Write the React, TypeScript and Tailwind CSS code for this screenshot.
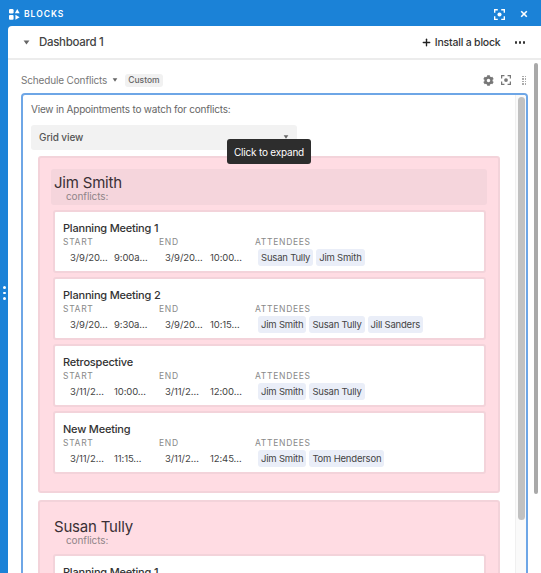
import { Plus } from 'lucide-react';
import { FaCog } from 'react-icons/fa';

const font = { fontFamily: 'Inter, "Liberation Sans", sans-serif' };

type Meeting = {
  title: string;
  startDate: string;
  startTime: string;
  endDate: string;
  endTime: string;
  attendees: string[];
};

const jimMeetings: Meeting[] = [
  { title: 'Planning Meeting 1', startDate: '3/9/20…', startTime: '9:00a…', endDate: '3/9/20…', endTime: '10:00…', attendees: ['Susan Tully', 'Jim Smith'] },
  { title: 'Planning Meeting 2', startDate: '3/9/20…', startTime: '9:30a…', endDate: '3/9/20…', endTime: '10:15…', attendees: ['Jim Smith', 'Susan Tully', 'Jill Sanders'] },
  { title: 'Retrospective', startDate: '3/11/2…', startTime: '10:00…', endDate: '3/11/2…', endTime: '12:00…', attendees: ['Jim Smith', 'Susan Tully'] },
  { title: 'New Meeting', startDate: '3/11/2…', startTime: '11:15…', endDate: '3/11/2…', endTime: '12:45…', attendees: ['Jim Smith', 'Tom Henderson'] },
];

const susanMeetings: Meeting[] = [jimMeetings[0]];

const Caret = ({ className }: { className: string }) => (
  <svg viewBox="0 0 8 6" className={className} fill="currentColor">
    <path d="M0.5 0.5h7L4 5.5z" />
  </svg>
);

const FocusIcon = ({ className }: { className: string }) => (
  <svg viewBox="0 0 16 16" className={className} fill="none" stroke="currentColor" strokeWidth="2">
    <path d="M1 5.5V1h4.5M10.5 1H15v4.5M15 10.5V15h-4.5M5.5 15H1v-4.5" />
    <circle cx="8" cy="8" r="3" fill="currentColor" stroke="none" />
  </svg>
);

const BlocksLogo = () => (
  <svg viewBox="0 0 12 12" className="w-[11px] h-[11px] text-white" fill="currentColor">
    <rect x="0" y="0" width="5" height="5" rx="1.4" />
    <path d="M9 0l2.6 4.6H6.4z" />
    <rect x="0" y="6.6" width="5" height="5" rx="1" />
    <path d="M7 6.4l4.6 2.6L7 11.6z" />
  </svg>
);

const MeetingCard = ({ meeting }: { meeting: Meeting }) => (
  <div className="h-[63px] shrink-0 bg-white rounded-[3px] border-2 border-[#f3d3da] pl-[8px] pt-[8px]">
    <div className="text-[11px] leading-[16px] font-medium tracking-[-0.2px] text-[#333]">{meeting.title}</div>
    <div className="flex">
      <div className="w-[96px] shrink-0">
        <div className="text-[8.5px] leading-[12px] tracking-[0.7px] text-[#898989]">START</div>
        <div className="flex pl-[7px] pt-[1px] text-[9.5px] leading-[18px] tracking-[-0.1px] text-[#444]">
          <span className="w-[44px]">{meeting.startDate}</span>
          <span>{meeting.startTime}</span>
        </div>
      </div>
      <div className="w-[96px] shrink-0">
        <div className="text-[8.5px] leading-[12px] tracking-[0.7px] text-[#898989]">END</div>
        <div className="flex pl-[6px] pt-[1px] text-[9.5px] leading-[18px] tracking-[-0.1px] text-[#444]">
          <span className="w-[45px]">{meeting.endDate}</span>
          <span>{meeting.endTime}</span>
        </div>
      </div>
      <div className="min-w-0">
        <div className="text-[8.5px] leading-[12px] tracking-[0.7px] text-[#898989]">ATTENDEES</div>
        <div className="flex gap-[3px] pl-[3px] pt-[1px]">
          {meeting.attendees.map((name) => (
            <span key={name} className="h-[17px] px-[3px] rounded-[3px] bg-[#eaeef8] text-[9.5px] leading-[17px] tracking-[-0.2px] text-[#444] whitespace-nowrap">
              {name}
            </span>
          ))}
        </div>
      </div>
    </div>
  </div>
);

const PersonGroup = ({ name, meetings, tinted }: { name: string; meetings: Meeting[]; tinted?: boolean }) => (
  <div className="shrink-0 w-[462px] bg-[#ffdce3] rounded-[3px] border-2 border-[#f3d3da] pt-[11px] pb-[17px] pl-[11px] pr-[11px]">
    <div className={`h-[36px] rounded-[3px] pl-[3px] pt-[5px] ${tinted ? 'bg-[#f5d5dc]' : ''}`}>
      <div className="text-[15px] leading-[17px] tracking-[-0.2px] text-[#3a3035]">{name}</div>
      <div className="pl-[12px] text-[10px] leading-[10px] tracking-[-0.1px] text-[#8f8488]">conflicts:</div>
    </div>
    <div className="flex flex-col gap-[4px] mt-[5px] ml-[2px] mr-[1px]">
      {meetings.map((m) => (
        <MeetingCard key={m.title} meeting={m} />
      ))}
    </div>
  </div>
);

export default function App() {
  return (
    <div className="relative w-[541px] h-[573px] overflow-hidden bg-[#1b82d7] flex flex-col" style={font}>
      <div className="h-[26px] shrink-0 flex items-center pl-[9px] pr-[13px] pt-[2px] text-white">
        <BlocksLogo />
        <span className="ml-[4px] text-[8.5px] font-semibold tracking-[1px]">BLOCKS</span>
        <FocusIcon className="w-[11px] h-[11px] ml-auto" />
        <svg viewBox="0 0 10 10" className="w-[8px] h-[8px] ml-[15px]" stroke="currentColor" strokeWidth="2">
          <path d="M1.5 1.5l7 7M8.5 1.5l-7 7" />
        </svg>
      </div>

      <div className="relative flex-1 min-h-0 ml-[8px] bg-white rounded-tl-[4px] flex flex-col">
        <div className="h-[34px] shrink-0 flex items-center border-b-2 border-[#ececec] pl-[15px] pr-[16px] pt-[1px]">
          <Caret className="w-[7px] h-[5px] text-[#666]" />
          <span className="ml-[9px] text-[11.5px] font-medium tracking-[-0.3px] text-[#444]">Dashboard 1</span>
          <Plus className="ml-auto w-[11px] h-[11px] text-[#222]" strokeWidth={3} />
          <span className="ml-[3px] text-[10.5px] font-medium tracking-[-0.2px] text-[#333]">Install a block</span>
          <div className="ml-[14px] flex gap-[1.5px]">
            <span className="w-[2.5px] h-[2.5px] rounded-full bg-[#333]" />
            <span className="w-[2.5px] h-[2.5px] rounded-full bg-[#333]" />
            <span className="w-[2.5px] h-[2.5px] rounded-full bg-[#333]" />
          </div>
        </div>

        <div className="h-[33px] shrink-0 flex items-center pl-[13px] pr-[15px] pt-[7px]">
          <span className="text-[10px] tracking-[-0.15px] text-[#777]">Schedule Conflicts</span>
          <Caret className="ml-[5px] w-[6px] h-[4px] text-[#666]" />
          <span className="ml-[7px] h-[13px] px-[3px] rounded-[3px] bg-[#f1f1f1] text-[8.5px] leading-[13px] font-medium text-[#666]">Custom</span>
          <FaCog className="ml-auto w-[11px] h-[11px] text-[#777]" />
          <FocusIcon className="ml-[7px] w-[10px] h-[10px] text-[#777]" />
          <div className="ml-[11px] grid grid-cols-2 gap-[1px]">
            {[0, 1, 2, 3, 4, 5, 6, 7].map((i) => (
              <span key={i} className="w-[1.5px] h-[1.5px] bg-[#aaa]" />
            ))}
          </div>
        </div>

        <div className="relative flex-1 min-h-0 ml-[13px] mr-[13px] rounded-t-[4px] border-x-2 border-t-2 border-[#6ea6e6] overflow-hidden pl-[8px] pt-[7px]">
          <div className="text-[10px] leading-[14px] tracking-[-0.2px] text-[#666]">View in Appointments to watch for conflicts:</div>
          <div className="mt-[9px] w-[266px] h-[25px] rounded-[3px] bg-[#f2f2f2] flex items-center pl-[8px] pr-[8px] pb-[1px] text-[10px] font-medium tracking-[-0.1px] text-[#555]">
            Grid view
            <Caret className="ml-auto w-[6px] h-[4px] text-[#666]" />
          </div>
          <div className="flex flex-col gap-[7px] mt-[6px] ml-[7px]">
            <PersonGroup name="Jim Smith" meetings={jimMeetings} tinted />
            <PersonGroup name="Susan Tully" meetings={susanMeetings} />
          </div>
          <div className="absolute top-0 right-0 bottom-0 w-[11px] bg-[#fafafa] border-l border-[#f0f0f0]" />
          <div className="absolute top-[2px] right-[1px] w-[7px] h-[423px] rounded-full bg-[#c1c1c1]" />
        </div>

        <div className="absolute top-[37px] right-[3px] w-[4px] h-[431px] rounded-full bg-[#a9a9a9]" />
      </div>

      <div className="absolute left-[3px] top-[286px] flex flex-col gap-[3px]">
        <span className="w-[2.5px] h-[2.5px] rounded-full bg-white" />
        <span className="w-[2.5px] h-[2.5px] rounded-full bg-white" />
        <span className="w-[2.5px] h-[2.5px] rounded-full bg-white" />
      </div>

      <div className="absolute left-[227px] top-[139px] w-[84px] h-[25px] rounded-[3px] bg-[#2d2d2d] text-white text-[10px] tracking-[-0.2px] leading-[26px] text-center">
        Click to expand
      </div>
    </div>
  );
}
